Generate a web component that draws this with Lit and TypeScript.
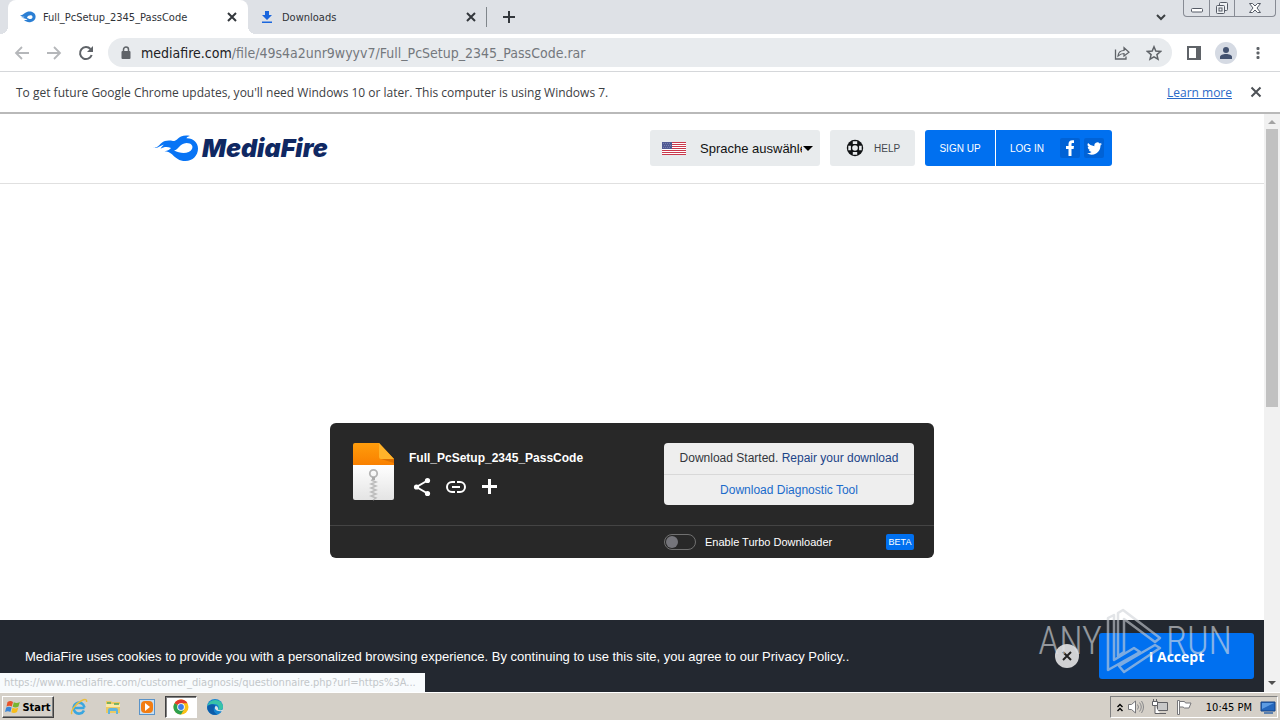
import { LitElement, html, css } from "lit";
import { customElement } from "lit/decorators.js";

const crossIcon = html`<svg width="10" height="10" viewBox="0 0 10 10" aria-hidden="true">
  <path d="M1 1l8 8M9 1l-8 8" fill="none" stroke="currentColor" stroke-width="2" />
</svg>`;

@customElement("browser-tabs")
class BrowserTabs extends LitElement {
  static styles = css`
    :host { display: flex; height: 34px; background: #dee1e6; padding-left: 8px; color: #3c4043; }
    button { border: 0; background: none; padding: 0; color: inherit; display: flex; align-items: center; justify-content: center; }
    .tab { position: relative; width: 240px; display: flex; align-items: center; box-sizing: border-box; padding: 0 11px 0 12px; }
    .tab.active { background: #fff; border-radius: 8px 8px 0 0; }
    .tab.active::before, .tab.active::after { content: ""; position: absolute; bottom: 0; width: 8px; height: 8px; }
    .tab.active::before { left: -8px; background: radial-gradient(circle at 0 0, transparent 8px, #fff 8px); }
    .tab.active::after { right: -8px; background: radial-gradient(circle at 100% 0, transparent 8px, #fff 8px); }
    .tab.idle { padding: 0 12px 0 11px; }
    .icon { flex: none; width: 16px; height: 16px; margin-right: 7px; }
    .title { flex: 1; font: 11px "DejaVu Sans Condensed", "DejaVu Sans", sans-serif; color: #303338; white-space: nowrap; }
    .close { width: 10px; height: 10px; color: #33373c; }
    .sep { width: 1px; height: 20px; align-self: center; margin-left: -2px; background: #80868b; }
    .plus { width: 44px; color: #33373c; }
    .grow { flex: 1; }
    .down { width: 28px; color: #3c4043; }
    .window { display: flex; height: 17px; box-sizing: border-box; margin: 0 4px 0 8px; border: 1px solid #878b94; border-top: 0; border-radius: 0 0 4px 4px; color: #555b66; }
    .window button { width: 25px; }
    .window button + button { border-left: 1px solid #878b94; }
    .window button:last-child { width: 41px; }
  `;
  render() {
    return html`
      <div class="tab active">
        <svg class="icon" viewBox="0 0 16 16"><path d="M0 6C2 7 3 5 5 4c2-2 7-2.500 9.500.5 2.300 3 1 7.500-3.500 8.500-3 .6-5-.3-7-2 2 .2 3 0 3.500-.7C4.500 9.500 3 9 1 9c2-.2 3-.8 3.500-1.300C2.500 8 1 7.500 0 6z" fill="#2b7fd4"/><path d="M7 8.500C8 6 12.500 5.300 12.500 8S8.500 10.500 7 8.500z" fill="#fff"/></svg>
        <span class="title">Full_PcSetup_2345_PassCode</span>
        <button class="close" aria-label="Close tab">${crossIcon}</button>
      </div>
      <div class="tab idle">
        <svg class="icon" viewBox="0 0 16 16"><path d="M6 2h4v4h3l-5 5-5-5h3zM3 12.500h10V14H3z" fill="#1a66dd"/></svg>
        <span class="title">Downloads</span>
        <button class="close" aria-label="Close tab">${crossIcon}</button>
      </div>
      <span class="sep"></span>
      <button class="plus" aria-label="New tab"><svg width="12" height="12" viewBox="0 0 12 12"><path d="M6 0v12M0 6h12" stroke="currentColor" stroke-width="2"/></svg></button>
      <span class="grow"></span>
      <button class="down" aria-label="Search tabs"><svg width="10" height="7" viewBox="0 0 10 7"><path d="M1 1l4 4 4-4" fill="none" stroke="currentColor" stroke-width="2"/></svg></button>
      <div class="window">
        <button aria-label="Minimize"><svg width="12" height="16" viewBox="0 0 12 16"><rect x=".5" y="8.500" width="11" height="3.500" rx="1" fill="#fff" stroke="currentColor"/></svg></button>
        <button aria-label="Restore"><svg width="14" height="16" viewBox="0 0 14 16"><g fill="#eef0f3" stroke="currentColor"><rect x="4.500" y="2.500" width="8" height="8" rx="1"/><rect x="1.500" y="5.500" width="8" height="8" rx="1"/><rect x="4" y="8" width="3" height="3"/></g></svg></button>
        <button aria-label="Close window"><svg width="12" height="16" viewBox="0 0 12 16"><path d="M.5 3.500h3L6 6l2.500-2.500h3L8 8l3.500 4.500h-3L6 10l-2.500 2.500h-3L4 8z" fill="#fff" stroke="currentColor"/></svg></button>
      </div>`;
  }
}

@customElement("browser-toolbar")
class BrowserToolbar extends LitElement {
  static styles = css`
    :host { display: flex; align-items: center; height: 37px; background: #fff; border-bottom: 1px solid #d5d7da; padding: 0 6px; color: #5f6368; }
    button { flex: none; width: 32px; height: 32px; padding: 0; border: 0; background: none; color: inherit; display: flex; align-items: center; justify-content: center; }
    .off { color: #b5b7ba; }
    .omnibox { flex: 1; height: 29px; margin: 0 6px; border-radius: 15px; background: #e8ebee; display: flex; align-items: center; padding-left: 12px; padding-right: 2px; }
    .address { flex: 1; margin-left: 9px; font: 14px "DejaVu Sans Condensed", "DejaVu Sans", sans-serif; color: #74787d; white-space: nowrap; }
    .address b { font-weight: normal; color: #202124; }
    .avatar { width: 22px; height: 22px; border-radius: 50%; background: #d5dae3; display: flex; align-items: center; justify-content: center; }
  `;
  render() {
    return html`
      <button class="off" aria-label="Back"><svg width="16" height="16" viewBox="0 0 16 16"><path d="M15 8H2M8 2L2 8l6 6" fill="none" stroke="currentColor" stroke-width="1.800"/></svg></button>
      <button class="off" aria-label="Forward"><svg width="16" height="16" viewBox="0 0 16 16"><path d="M1 8h13M8 2l6 6-6 6" fill="none" stroke="currentColor" stroke-width="1.800"/></svg></button>
      <button aria-label="Reload"><svg width="16" height="16" viewBox="0 0 16 16"><path d="M13.700 10A6 6 0 1 1 12.500 4" fill="none" stroke="currentColor" stroke-width="2"/><path d="M15 1v6H9z" fill="currentColor"/></svg></button>
      <div class="omnibox">
        <svg width="12" height="14" viewBox="0 0 12 14"><rect x="1.500" y="5" width="9" height="8" rx="1" fill="#5f6368"/><path d="M3.500 6V3.500a2.500 2.500 0 0 1 5 0V6" fill="none" stroke="#5f6368" stroke-width="1.500"/></svg>
        <div class="address"><b>mediafire.com</b>/file/49s4a2unr9wyyv7/Full_PcSetup_2345_PassCode.rar</div>
        <button aria-label="Share"><svg width="16" height="16" viewBox="0 0 16 16"><path d="M1.500 4.500V14h10.500v-2.500" fill="none" stroke="currentColor" stroke-width="1.300"/><path d="M4 11c.3-3.500 2.500-5.500 6-5.500V2.700L15 7.200l-5 3.800V8.500C7.500 8.500 6 9.300 4 11z" fill="none" stroke="currentColor" stroke-width="1.200"/></svg></button>
        <button aria-label="Bookmark"><svg width="16" height="16" viewBox="0 0 16 16"><path d="M8 1.800l1.800 4.300 4.700.4-3.600 3.100 1.100 4.600L8 11.800l-4 2.400 1.100-4.600L1.500 6.500l4.700-.4z" fill="none" stroke="currentColor" stroke-width="1.500"/></svg></button>
      </div>
      <button aria-label="Side panel"><svg width="14" height="14" viewBox="0 0 14 14"><rect x="1" y="1" width="12" height="12" fill="none" stroke="currentColor" stroke-width="2"/><path d="M9 1h4v12H9z" fill="currentColor"/></svg></button>
      <button aria-label="Profile"><span class="avatar"><svg width="14" height="14" viewBox="0 0 14 14" fill="#435270"><circle cx="7" cy="4" r="3"/><path d="M1 13v-2c0-4 12-4 12 0v2z"/></svg></span></button>
      <button aria-label="Menu"><svg width="4" height="14" viewBox="0 0 4 14" fill="currentColor"><rect x=".5" y="1" width="3" height="3" rx="1"/><rect x=".5" y="5.500" width="3" height="3" rx="1"/><rect x=".5" y="10" width="3" height="3" rx="1"/></svg></button>`;
  }
}

@customElement("update-bar")
class UpdateBar extends LitElement {
  static styles = css`
    :host { display: flex; align-items: center; height: 40px; background: #fff; padding: 0 18px 0 16px; border-bottom: 2px solid #b9b9b9; font: 12px "Open Sans", "Noto Sans", sans-serif; color: #3c4043; white-space: nowrap; }
    .message { flex: 1; }
    a { color: #2a6ac8; text-underline-offset: 1px; }
    button { margin-left: 18px; padding: 0; border: 0; background: none; color: #4d5156; display: flex; }
  `;
  render() {
    return html`<span class="message">To get future Google Chrome updates, you'll need Windows 10 or later. This computer is using Windows 7.</span>
      <a href="#">Learn more</a>
      <button aria-label="Dismiss"><svg width="12" height="12" viewBox="0 0 12 12"><path d="M1.500 1.500l9 9M10.500 1.500l-9 9" stroke="currentColor" stroke-width="2"/></svg></button>`;
  }
}

@customElement("site-header")
class SiteHeader extends LitElement {
  static styles = css`
    :host { display: block; border-bottom: 1px solid #e0e0e0; padding: 16px 20px 17px; }
    .inner { display: flex; align-items: center; gap: 10px; max-width: 960px; margin: 0 auto; height: 36px; font: 10px "Liberation Sans", Arial, sans-serif; }
    .logo { flex: 1; display: flex; align-items: center; gap: 2px; text-decoration: none; color: #0f2862; font: italic 900 25px Inter, "Liberation Sans", sans-serif; }
    .lang { position: relative; width: 170px; height: 36px; border-radius: 3px; background: #e8ebed; }
    .lang svg { position: absolute; pointer-events: none; }
    .flag { left: 12px; top: 12px; }
    .caret { right: 7px; top: 16px; }
    select { appearance: none; width: 170px; height: 36px; border: 0; padding: 0 18px 0 50px; background: none; font: 13px "Liberation Sans", Arial, sans-serif; color: #111; text-overflow: clip; }
    .help { height: 36px; width: 85px; border: 0; border-radius: 3px; background: #e8ebed; display: flex; align-items: center; gap: 10px; padding: 0 0 0 16px; font: inherit; color: #44484e; box-sizing: border-box; }
    .account { display: flex; height: 36px; border-radius: 3px; background: #0070f0; overflow: hidden; }
    .account a { color: #fff; text-decoration: none; display: flex; align-items: center; }
    .signup { width: 70px; justify-content: center; border-right: 1px solid #fff; }
    .login { width: 50px; padding-left: 14px; }
    .social { width: 20px; height: 20px; margin: 8px 4px 8px 0; background: #0062d6; border-radius: 2px; justify-content: center; }
    .social:last-child { margin-right: 8px; }
  `;
  render() {
    return html`<div class="inner">
      <a class="logo" href="#">
        <svg width="48" height="28" viewBox="0 0 48 28"><path d="M1 13.500c4 1 5.500-2 8.500-4.500 3-2.500 7-2.800 11.500-2 4 0 4-2.500 8-4.500 2.500-1 6-1.200 9-.5-2.500.5-3.500 1.500-3.500 2.300C41 4 46 8.500 46 14.500 46 21.500 40.500 27 33.500 27c-6.500 0-9.500-3-13.500-6.800-2.500-2-4.500-3-7.500-3 3.500-.5 5.500-1.700 6.500-3.200-3.500-1.500-7-1.500-10.500.8 1-2 2-3 3.500-4-4.500.7-6 4.500-11 2.700z" fill="#0874f5"/><path d="M22 16.500c5-1 5.500-7 12.500-7.500 5 0 7 3 5.500 6-2.500 5-11.500 5-18 1.500z" fill="#fff"/></svg>
        <span>MediaFire</span>
      </a>
      <div class="lang">
        <select aria-label="Sprache"><option>Sprache auswählen</option></select>
        <svg class="flag" width="24" height="13" viewBox="0 0 24 13"><path fill="#fff" d="M0 0h24v13H0z"/><path d="M0 .5h24M0 2.500h24M0 4.500h24M0 6.500h24M0 8.500h24M0 10.500h24M0 12.500h24" stroke="#c9384c"/><path fill="#515b94" d="M0 0h10v7H0z"/><path d="M1 1.500h8M2 3.500h8M1 5.500h8" stroke="#7880ad" stroke-dasharray="1 1"/></svg>
        <svg class="caret" width="10" height="5" viewBox="0 0 10 5"><path d="M0 0h10L5 5z"/></svg>
      </div>
      <button class="help"><svg width="18" height="18" viewBox="0 0 18 18"><circle cx="9" cy="9" r="8.200" fill="#101214"/><g fill="none" stroke="#e8ebed" stroke-width="2.600"><path d="M6.800 3.600h4.400M6.800 14.400h4.400M3.600 6.800v4.400M14.400 6.800v4.400"/></g><circle cx="9" cy="9" r="2.800" fill="#e8ebed"/></svg>HELP</button>
      <div class="account">
        <a class="signup" href="#">SIGN UP</a>
        <a class="login" href="#">LOG IN</a>
        <a class="social" href="#" aria-label="Facebook"><svg width="16" height="16" viewBox="0 0 16 16"><path d="M6.500 16V9H4V6h2.500V4c0-2.500 1.500-3.800 3.700-3.800L12 .3v2.600h-1.300c-1 0-1.200.5-1.200 1.200V6H12l-.4 3H9.500v7z" fill="#fff"/></svg></a>
        <a class="social" href="#" aria-label="Twitter"><svg width="15" height="15" viewBox="0 0 24 24"><path d="M24 4.600a10 10 0 0 1-2.800.8 5 5 0 0 0 2.200-2.700 10 10 0 0 1-3.100 1.200 4.900 4.900 0 0 0-8.400 4.500A14 14 0 0 1 1.700 3.100a4.900 4.900 0 0 0 1.500 6.600A5 5 0 0 1 1 9.100a4.900 4.900 0 0 0 4 4.800 5 5 0 0 1-2.300.1 4.900 4.900 0 0 0 4.600 3.400A10 10 0 0 1 0 19.500a14 14 0 0 0 21.500-12.400A10 10 0 0 0 24 4.600z" fill="#fff"/></svg></a>
      </div>
    </div>`;
  }
}

@customElement("download-card")
class DownloadCard extends LitElement {
  static styles = css`
    :host { display: block; max-width: 604px; margin: 0 auto; border-radius: 6px; background: #282828; color: #fff; font: 12px "Liberation Sans", Arial, sans-serif; }
    .top { display: flex; align-items: flex-start; padding: 20px 20px 20px 22px; border-bottom: 1px solid #444; }
    .file { flex: none; margin-right: 14px; }
    .info { flex: 1; padding-top: 7px; }
    h1 { margin: 0; font-size: 12px; line-height: 16px; }
    .actions { display: flex; gap: 14px; padding: 11px 0 0 3px; }
    .actions button { border: 0; padding: 0; background: none; color: #fff; width: 20px; height: 20px; display: flex; align-items: center; justify-content: center; }
    .actions svg { flex: none; }
    .status { width: 250px; border-radius: 4px; background: #eee; color: #33363b; text-align: center; line-height: 31px; }
    .status div + div { border-top: 1px solid #d8d8d8; line-height: 30px; }
    a { text-decoration: none; color: #1c4488; }
    .tool { color: #1b6bcb; }
    .bottom { display: flex; justify-content: flex-end; padding: 0 20px; height: 32px; align-items: center; }
    .turbo { width: 250px; display: flex; align-items: center; font-size: 11px; }
    label { display: flex; align-items: center; gap: 9px; flex: 1; }
    input { appearance: none; box-sizing: border-box; margin: 0; width: 32px; height: 16px; border: 1px solid #707070; border-radius: 8px; padding: 1px; }
    input::before { content: ""; display: block; width: 12px; height: 12px; border-radius: 50%; background: #75757b; }
    .beta { background: #0070f0; border-radius: 2px; width: 28px; text-align: center; line-height: 16px; font-size: 9px; }
  `;
  render() {
    return html`<div class="top">
        <svg class="file" width="43" height="58" viewBox="0 0 43 58">
          <defs><linearGradient id="o" x1="0" y1="0" x2="0" y2="1"><stop offset="0" stop-color="#ff9d0c"/><stop offset="1" stop-color="#f98000"/></linearGradient><linearGradient id="w" x1="0" y1="0" x2="0" y2="1"><stop offset="0" stop-color="#fff"/><stop offset="1" stop-color="#e4e4e4"/></linearGradient></defs>
          <path d="M1 22h41v33a2 2 0 0 1-2 2H3a2 2 0 0 1-2-2z" fill="url(#w)"/>
          <path d="M3 0h24l15 16v6H1V2a2 2 0 0 1 2-2z" fill="url(#o)"/>
          <path d="M27 0l15 16H29a2 2 0 0 1-2-2z" fill="#ffb32a"/><path d="M29 16h13v4z" fill="#dd7000"/>
          <circle cx="21.500" cy="30.500" r="3.700" fill="none" stroke="#b4b4b4" stroke-width="1.800"/>
          <path d="M21.500 34v3" stroke="#aaa" stroke-width="3"/>
          <path d="M19 37l5 2-5 2 5 2-5 2 5 2-5 2 5 2-5 2 5 2-3 2" fill="none" stroke="#bdbdbd" stroke-width="1.500"/>
        </svg>
        <div class="info">
          <h1>Full_PcSetup_2345_PassCode</h1>
          <div class="actions">
            <button aria-label="Share"><svg width="18" height="20" viewBox="0 0 18 20"><path d="M14.500 3.500L3.500 10l11 6.500" fill="none" stroke="#fff" stroke-width="2"/><g fill="#fff"><circle cx="14.500" cy="3.500" r="2.600"/><circle cx="3.500" cy="10" r="2.600"/><circle cx="14.500" cy="16.500" r="2.600"/></g></svg></button>
            <button aria-label="Copy link"><svg width="20" height="12" viewBox="0 0 20 12"><path d="M9 1H6a5 5 0 0 0 0 10h3M11 1h3a5 5 0 0 1 0 10h-3M6 6h8" fill="none" stroke="#fff" stroke-width="2"/></svg></button>
            <button aria-label="Add"><svg width="16" height="16" viewBox="0 0 16 16"><path d="M7.500 0v15M0 7.500h15" stroke="#fff" stroke-width="3"/></svg></button>
          </div>
        </div>
        <div class="status">
          <div>Download Started. <a href="#">Repair your download</a></div>
          <div><a class="tool" href="#">Download Diagnostic Tool</a></div>
        </div>
      </div>
      <div class="bottom"><div class="turbo">
        <label><input type="checkbox">Enable Turbo Downloader</label><span class="beta">BETA</span>
      </div></div>`;
  }
}

@customElement("cookie-bar")
class CookieBar extends LitElement {
  static styles = css`
    :host { display: flex; align-items: center; height: 72px; padding: 0 10px 0 25px; background: #232830; color: #fff; font: 13px "Liberation Sans", Arial, sans-serif; white-space: nowrap; }
    p { flex: 1; margin: 0; }
    .close { flex: none; width: 24px; height: 24px; border-radius: 50%; border: 0; padding: 0; background: #d0d1d3; color: #222; display: flex; align-items: center; justify-content: center; margin-right: 20px; }
    .accept { width: 155px; height: 46px; border: 0; border-radius: 3px; background: #0070f0; color: #fff; font: bold 14px "Open Sans", sans-serif; }
  `;
  render() {
    return html`<p>MediaFire uses cookies to provide you with a personalized browsing experience. By continuing to use this site, you agree to our Privacy Policy..</p>
      <button class="close" aria-label="Close">${crossIcon}</button>
      <button class="accept">I Accept</button>`;
  }
}

@customElement("task-bar")
class TaskBar extends LitElement {
  static styles = css`
    :host { display: flex; align-items: center; height: 26px; padding: 1px 2px 0; border-top: 1px solid #fff; background: #d5d0c8; font: 11px "DejaVu Sans Condensed", "DejaVu Sans", sans-serif; color: #000; }
    button { border: 0; padding: 0; background: none; height: 22px; width: 34px; display: flex; align-items: center; justify-content: center; box-sizing: border-box; }
    .start { width: 52px; gap: 1px; margin-right: 8px; border: 1px solid; border-color: #fff #404040 #404040 #fff; box-shadow: inset -1px -1px #808080; font: bold 11px "DejaVu Sans Condensed", "DejaVu Sans", sans-serif; }
    .start svg { flex: none; }
    .open { background: #fff; border: 1px solid; border-color: #404040 #fff #fff #404040; box-shadow: inset 1px 1px #808080; width: 32px; margin: 0 1px; }
    .grow { flex: 1; }
    .tray { display: flex; align-items: center; height: 22px; box-sizing: border-box; padding: 0 1px 0 5px; border: 1px solid; border-color: #808080 #fff #fff #808080; }
    .tray button { width: 24px; height: 20px; }
    .tray .more { width: 8px; }
    .tray .desk { width: 16px; }
    time { margin: 0 8px 0 10px; white-space: nowrap; }
  `;
  render() {
    return html`
      <button class="start"><svg width="16" height="16" viewBox="0 0 16 16"><path d="M2.500 3C5 1.500 6.500 2 8 3L6.800 7.500C5 6.500 3.500 6.500 1.500 7.500z" fill="#e8532a"/><path d="M8.800 3.300c2 1 4 .9 6-.3L13.500 7.600c-2 1.200-4 1.100-5.800.2z" fill="#77b52f"/><path d="M1.200 8.500c2-1.200 3.800-1 5.400 0L5.400 13C3.800 12 2 12 0 13z" fill="#3a86d8"/><path d="M7.500 8.800c2 1 3.800 1 5.800-.2L12 13c-2 1.200-3.900 1.200-5.700.3z" fill="#f7bd19"/></svg>Start</button>
      <button aria-label="Internet Explorer"><svg width="18" height="18" viewBox="0 0 18 18"><path d="M4 10h10.500M14 12.500A5.500 5.500 0 1 1 14.500 9.500" fill="none" stroke="#39a6e0" stroke-width="2.600"/><path d="M2 16C0 14 5 6 11 3c4-2 6-2 5.500 1" fill="none" stroke="#eabe3d" stroke-width="1.500"/></svg></button>
      <button aria-label="Explorer"><svg width="18" height="18" viewBox="0 0 18 18"><path d="M2 3h5l1 1h8v11H2z" fill="#ecca62"/><path d="M2 6h14v3H2z" fill="#fbe9a6"/><path d="M3 5h4M10 6h5" stroke="#56a85a" stroke-width="1.500"/><path d="M4 16v-4q0-2 2-2h6q2 0 2 2v4h-2v-3H6v3z" fill="#61b4dc"/></svg></button>
      <button aria-label="Media Player"><svg width="18" height="18" viewBox="0 0 18 18"><rect x="1.500" y="1.500" width="15" height="15" fill="#c8dff2" stroke="#5a93c8"/><rect x="3" y="3" width="12" height="12" rx="4" fill="#f27d12"/><path d="M7 5l5 4-5 4z" fill="#fff"/></svg></button>
      <button class="open" aria-label="Chrome"><svg width="16" height="16" viewBox="0 0 16 16"><circle cx="8" cy="8" r="7.500" fill="#fbc116"/><path d="M8 8L1.500 4.250A7.500 7.500 0 0 1 14.500 4.250H8z" fill="#e33b2e"/><path d="M1.500 4.250A7.500 7.500 0 0 0 8 15.500l3.200-5.600L8 8z" fill="#2da04e"/><circle cx="8" cy="8" r="3.800" fill="#fff"/><circle cx="8" cy="8" r="2.900" fill="#3f7ee8"/></svg></button>
      <button aria-label="Edge"><svg width="18" height="18" viewBox="0 0 18 18"><circle cx="9" cy="9" r="8" fill="#1684d0"/><path d="M1.500 8A8 8 0 0 1 17 8c.5 3-2 5-5 4 2-3 0-6-3.500-6-3 0-6 1-7 2z" fill="#38c3a8"/><path d="M1.200 9C2 6 8 5 9.500 8c-3 2-2 7 2 8.500C6 18 1 14 1.200 9z" fill="#0d5ca9"/><path d="M9.500 8c-2 3 1 6 7 5l1-1.500c-2 1-4 .8-5.500.3C12.500 10 11.500 8 9.500 8z" fill="#d9e4e6"/></svg></button>
      <span class="grow"></span>
      <div class="tray">
        <button class="more" aria-label="Show hidden icons"><svg width="6" height="9" viewBox="0 0 6 9"><path d="M.5 4L3 1.500 5.500 4M.5 8L3 5.500 5.500 8" fill="none" stroke="#000" stroke-width="1.400"/></svg></button>
        <button aria-label="Volume"><svg width="18" height="16" viewBox="0 0 18 16"><path d="M1.500 5.500h3L8.500 2v12l-4-3.500h-3z" fill="#fff" stroke="#77777a"/><path d="M10.500 5.500q2 2.500 0 5M12.500 3.500q3.500 4.500 0 9M14.500 2q4 6 0 12" fill="none" stroke="#88888a"/></svg></button>
        <button aria-label="Network"><svg width="18" height="16" viewBox="0 0 18 16"><path d="M6.500 3.500h10v8h-10zM9 14.500h6" fill="#c8c8c8" stroke="#606064"/><path d="M1.500 2.500h5v4h-5zM4 6.500v8h5" fill="#fff" stroke="#606064"/><path d="M2.500 0v3M5.500 0v3" stroke="#606064"/></svg></button>
        <button aria-label="Action Center"><svg width="18" height="16" viewBox="0 0 18 16"><path d="M2.500 15.500v-14h2v14z" fill="#fff" stroke="#77777a"/><path d="M4.500 2.500h5l1 1.500h5.500l-2 5H9.500L8 8H4.500z" fill="#fff" stroke="#77777a"/></svg></button>
        <time>10:45 PM</time>
        <button class="desk" aria-label="Show desktop"><svg width="16" height="14" viewBox="0 0 16 14"><path d="M1 2h14v9H1z" fill="#2467bd" stroke="#174586"/><path d="M2 3h12L2 9z" fill="#5c9be2"/><path d="M4 13h9" stroke="#5d82b0" stroke-width="2"/></svg></button>
      </div>`;
  }
}

@customElement("app-root")
class AppRoot extends LitElement {
  static styles = css`
    :host { display: flex; flex-direction: column; height: 100vh; overflow: hidden; background: #fff; }
    .view { flex: 1; min-height: 0; display: flex; }
    .page { flex: 1; min-width: 0; display: flex; flex-direction: column; position: relative; }
    main { flex: 1; min-height: 0; padding-top: 239px; }
    .bar { width: 16px; background: #f1f1f1; display: flex; flex-direction: column; align-items: center; }
    .bar svg { flex: none; }
    .track { flex: 1; width: 12px; }
    .thumb { height: 51%; background: #c1c1c1; }
    .url { position: absolute; left: 0; bottom: 0; width: 425px; height: 19px; box-sizing: border-box; padding-left: 4px; background: #f8fbfd; color: #c3c7ca; font: 11px/20px "DejaVu Sans Condensed", "DejaVu Sans", sans-serif; white-space: nowrap; }
    .mark { position: absolute; right: 32px; bottom: 18px; display: flex; align-items: center; gap: 4px; opacity: 0.6; color: #dfe1e4; font: 38px/66px "Roboto Condensed", "Open Sans Condensed", Roboto, sans-serif; font-weight: 300; pointer-events: none; }
  `;
  render() {
    return html`
      <browser-tabs></browser-tabs>
      <browser-toolbar></browser-toolbar>
      <update-bar></update-bar>
      <div class="view">
        <div class="page">
          <site-header></site-header>
          <main><download-card></download-card></main>
          <cookie-bar></cookie-bar>
          <div class="url">https://www.mediafire.com/customer_diagnosis/questionnaire.php?url=https%3A...</div>
          <div class="mark"><span>ANY</span>
            <svg width="56" height="66" viewBox="0 0 56 66" fill="none" stroke="#cfd3d8" stroke-width="2.500" stroke-linejoin="round"><path d="M2 10l6-3v45l20-12 6 4L2 62zM12 5l5-3 37 28-5 4-31-23v33l-6 4zM13 58l36-21 5 3-36 24z"/></svg>
            <span>RUN</span></div>
        </div>
        <div class="bar" aria-hidden="true">
          <svg width="16" height="15" viewBox="0 0 16 15"><path d="M4 10l4-4 4 4z" fill="#a3a3a3"/></svg>
          <div class="track"><div class="thumb"></div></div>
          <svg width="16" height="17" viewBox="0 0 16 17"><path d="M4 6l4 4 4-4z" fill="#505050"/></svg>
        </div>
      </div>
      <task-bar></task-bar>`;
  }
}
